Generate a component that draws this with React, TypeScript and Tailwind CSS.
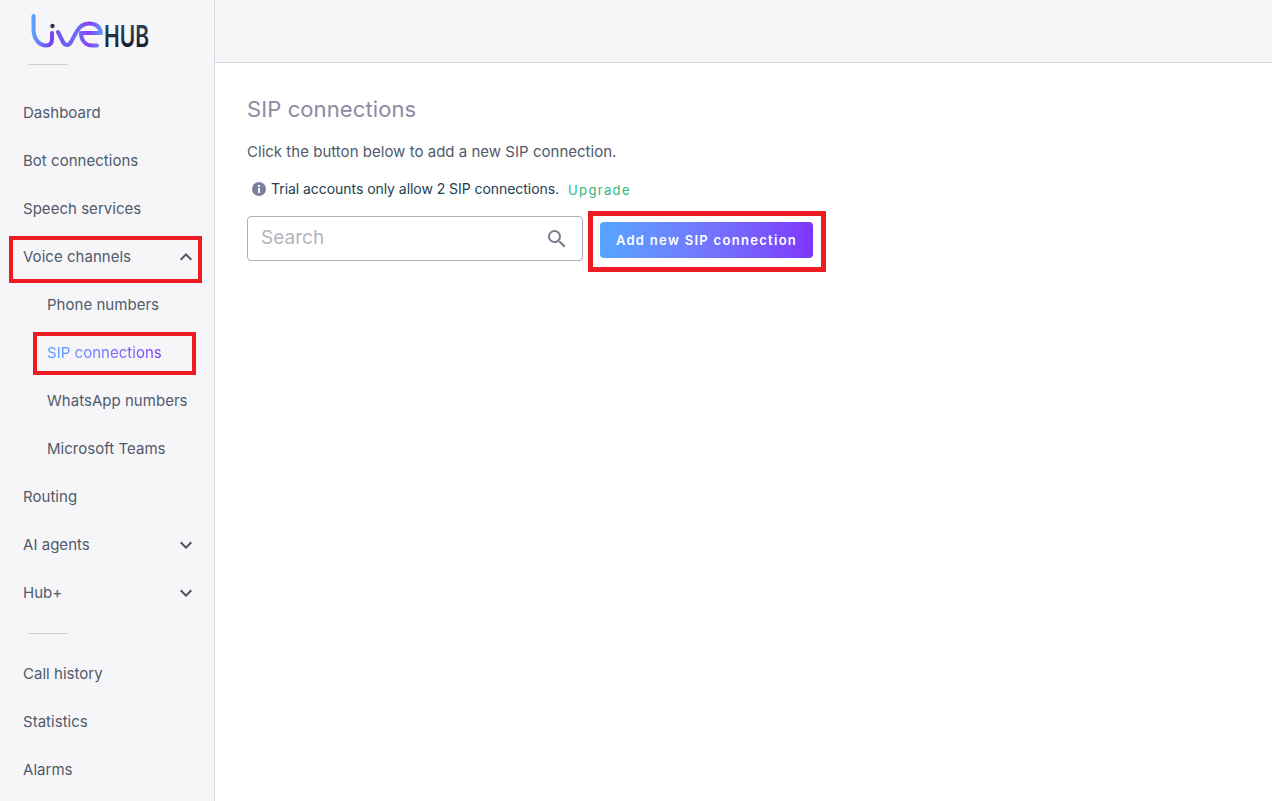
import React from 'react';

interface NavItem {
  label: string;
  chevron?: 'up' | 'down';
  sub?: boolean;
  active?: boolean;
  boxed?: string;
}

const topItems: NavItem[] = [
  { label: 'Dashboard' },
  { label: 'Bot connections' },
  { label: 'Speech services' },
  { label: 'Voice channels', chevron: 'up', boxed: 'left-[9px] right-[12px] top-[3px] -bottom-[2px]' },
  { label: 'Phone numbers', sub: true },
  { label: 'SIP connections', sub: true, active: true, boxed: 'left-[33px] right-[18px] top-[3px] bottom-[2px]' },
  { label: 'WhatsApp numbers', sub: true },
  { label: 'Microsoft Teams', sub: true },
  { label: 'Routing' },
  { label: 'AI agents', chevron: 'down' },
  { label: 'Hub+', chevron: 'down' },
];

const bottomItems: NavItem[] = [{ label: 'Call history' }, { label: 'Statistics' }, { label: 'Alarms' }];

const Logo = () => (
  <svg width="145" height="40" viewBox="30 13 145 40" className="block">
    <defs>
      <linearGradient id="liveGrad" gradientUnits="userSpaceOnUse" x1="32" y1="0" x2="104" y2="0">
        <stop offset="0" stopColor="#5aa5ff" />
        <stop offset="0.25" stopColor="#7a3ff0" />
        <stop offset="0.42" stopColor="#6a5cf2" />
        <stop offset="0.62" stopColor="#6a70f5" />
        <stop offset="0.8" stopColor="#8a3ff5" />
        <stop offset="1" stopColor="#58a8fb" />
      </linearGradient>
      <linearGradient id="hubGrad" x1="0" y1="0" x2="0" y2="1">
        <stop offset="0" stopColor="#35506a" />
        <stop offset="1" stopColor="#0d1420" />
      </linearGradient>
    </defs>
    <path
      d="M33.5 16 V29 C33.5 40 40 45.5 46 45.5 C50 45.5 52 43 52 39 V33"
      fill="none"
      stroke="url(#liveGrad)"
      strokeWidth="4"
      strokeLinecap="round"
    />
    <path
      d="M58 32 L63 42 C65 46 69 46 71 42 L77 31 C80 26 84 23.5 89 23.5 C96 23.5 100 27 101 33 H81 C81 41 86 45.5 92 45.5 H97"
      fill="none"
      stroke="url(#liveGrad)"
      strokeWidth="4"
      strokeLinecap="round"
      strokeLinejoin="round"
    />
    <circle cx="52.5" cy="26" r="2.2" fill="#2a3550" />
    <text
      x="104"
      y="47"
      fontFamily="Inter, sans-serif"
      fontWeight="600"
      fontSize="30"
      textLength="45"
      lengthAdjust="spacingAndGlyphs"
      fill="url(#hubGrad)"
    >
      HUB
    </text>
  </svg>
);

const Chevron = ({ dir }: { dir: 'up' | 'down' }) => (
  <svg width="24" height="24" viewBox="0 0 24 24" fill="#4b5563">
    <path d={dir === 'up' ? 'M12 8l-6 6 1.41 1.41L12 10.83l4.59 4.58L18 14z' : 'M16.59 8.59 12 13.17 7.41 8.59 6 10l6 6 6-6z'} />
  </svg>
);

const NavRow = ({ item }: { item: NavItem }) => (
  <div className={`relative flex h-12 items-center justify-between pr-4 ${item.sub ? 'pl-[47px]' : 'pl-[23px]'}`}>
    {item.active ? (
      <span className="bg-gradient-to-r from-[#5a9fff] to-[#7e34f8] bg-clip-text text-transparent">{item.label}</span>
    ) : (
      <span>{item.label}</span>
    )}
    {item.chevron && <Chevron dir={item.chevron} />}
    {item.boxed && <div className={`absolute border-4 border-[#ed1c24] ${item.boxed}`} />}
  </div>
);

export default function App() {
  return (
    <div className="flex h-[801px] w-[1272px] overflow-hidden bg-white font-['Inter',sans-serif] text-[15px] tracking-[0.03px] text-[#505a6b]">
      <aside className="flex w-[215px] shrink-0 flex-col border-r border-[#d9d9e0] bg-[#f6f6f9]">
        <div className="h-[64px] pl-[30px] pt-[13px]">
          <Logo />
        </div>
        <div className="ml-[28px] h-px w-10 bg-[#cfcfd6]" />
        <nav className="mt-[24px]">
          {topItems.map((item) => (
            <NavRow key={item.label} item={item} />
          ))}
        </nav>
        <div className="ml-[28px] mt-[16px] h-px w-10 bg-[#cfcfd6]" />
        <nav className="mt-[16px]">
          {bottomItems.map((item) => (
            <NavRow key={item.label} item={item} />
          ))}
        </nav>
      </aside>

      <div className="flex min-w-0 flex-1 flex-col">
        <header className="h-[63px] shrink-0 border-b border-[#d9d9e0] bg-[#f6f6f9]" />
        <main className="pl-8 pt-[32px]">
          <h1 className="text-[22px] leading-[28px] tracking-[0.1px] text-[#8b8ba3]">SIP connections</h1>
          <p className="mt-[17px] leading-[24px] tracking-[0.02px]">Click the button below to add a new SIP connection.</p>
          <div className="mt-[13px] flex h-6 items-center pl-[5px]">
            <svg width="14" height="14" viewBox="0 0 14 14" className="mr-[5px] shrink-0">
              <circle cx="7" cy="7" r="7" fill="#7a7f9e" />
              <rect x="6" y="6" width="2" height="5" fill="#ffffff" />
              <rect x="6" y="3" width="2" height="2" fill="#ffffff" />
            </svg>
            <span className="-mt-[2px] text-[14px] tracking-[-0.05px] text-[#23404f]">Trial accounts only allow 2 SIP connections.</span>
            <a className="ml-[9px] mt-[3px] text-[13px] tracking-[1.35px] text-[#2fb67c]">Upgrade</a>
          </div>
          <div className="mt-[15px] flex items-center">
            <div className="flex h-[45px] w-[336px] items-center justify-between rounded border border-[#aeaeb8] pl-[13px] pr-[13px]">
              <span className="-mt-[1px] text-[19px] text-[#b4b4c0]">Search</span>
              <svg width="24" height="24" viewBox="0 0 24 24" fill="#7b7b8e">
                <path d="M15.5 14h-.79l-.28-.27A6.471 6.471 0 0 0 16 9.5 6.5 6.5 0 1 0 9.5 16c1.61 0 3.09-.59 4.23-1.57l.27.28v.79l5 4.99L20.49 19l-4.99-5zm-6 0C7.01 14 5 11.99 5 9.5S7.01 5 9.5 5 14 7.01 14 9.5 11.99 14 9.5 14z" />
              </svg>
            </div>
            <div className="relative ml-[17px] mt-[3px]">
              <button className="block h-[36px] w-[213px] rounded bg-gradient-to-r from-[#55a5ff] to-[#7e34fb] pt-[2px] text-[13px] font-semibold tracking-[1.3px] text-white">
                Add new SIP connection
              </button>
              <div className="absolute -bottom-[14px] -left-[12px] -right-[13px] -top-[11px] border-[5px] border-[#ed1c24]" />
            </div>
          </div>
        </main>
      </div>
    </div>
  );
}
